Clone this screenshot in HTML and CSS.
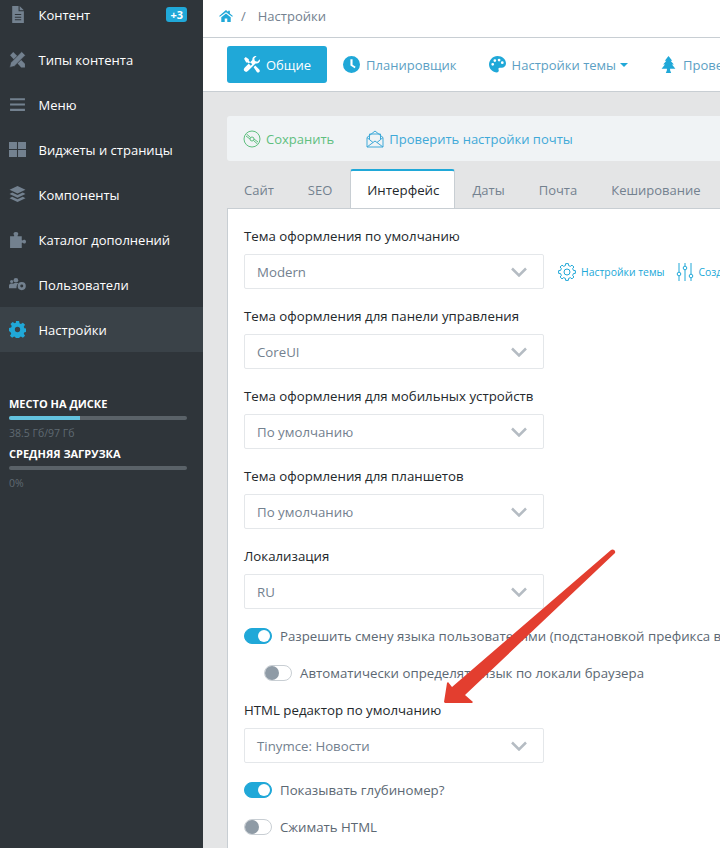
FILE: index.html
```html
<!DOCTYPE html>
<html>
<head>
  <title>Настройки</title>
  <meta name="viewport" content="width=device-width, initial-scale=1">
  <link rel="stylesheet" href="styles.css">
</head>
<body>
  <div class="app">
    <aside class="sidebar">
      <nav class="side-nav">
        <a class="side-item">
          <svg class="side-icon" viewBox="0 0 16 16"><path d="M3 0h6v5h5v11H3z M10 0l4 4h-4z M5.500 7.500v1h6v-1z M5.500 10v1h6v-1z M5.500 12.500v1h6v-1z" fill-rule="evenodd"/></svg>
          <span>Контент</span><span class="side-badge">+3</span>
        </a>
        <a class="side-item">
          <svg class="side-icon" viewBox="0 0 16 16"><path d="M1 4l3-3 11 11v3.500h-3.500z"/><path d="M12 .5l3.500 3.500L5 14.500 .5 15.500 1.500 11z" stroke="#2f353a" stroke-width=".7"/></svg>
          <span>Типы контента</span>
        </a>
        <a class="side-item">
          <svg class="side-icon" viewBox="0 0 16 16"><path d="M1 2h14v2H1z M1 7h14v2H1z M1 12h14v2H1z"/></svg>
          <span>Меню</span>
        </a>
        <a class="side-item">
          <svg class="side-icon" viewBox="0 0 16 16"><path d="M0 1h7.500v6.500H0z M8.500 1H16v6.500H8.500z M0 8.500h7.500V15H0z M8.500 8.500H16V15H8.500z"/></svg>
          <span>Виджеты и страницы</span>
        </a>
        <a class="side-item">
          <svg class="side-icon" viewBox="0 0 16 16"><path d="M8 0l7.500 3.500L8 7 .5 3.500z M3 6l5 2.500L13 6l2.500 1.500L8 11 .5 7.500z M3 10l5 2.500 5-2.500 2.500 1.500L8 15 .5 11.500z"/></svg>
          <span>Компоненты</span>
        </a>
        <a class="side-item">
          <svg class="side-icon" viewBox="0 0 16 16"><path d="M1 5h3.500c.5 0 .5-1 0-1.500-.6-.8-.2-2.500 2-2.500s2.600 1.700 2 2.500c-.5.5-.5 1.500 0 1.500H12v3.500c0 .5 1 .5 1.500 0 .8-.6 2.500-.2 2.500 1.500s-1.700 2.100-2.500 1.500c-.5-.5-1.500-.5-1.500 0V16H1z"/></svg>
          <span>Каталог дополнений</span>
        </a>
        <a class="side-item">
          <svg class="side-icon" viewBox="0 0 16 16"><circle cx="2.500" cy="5.200" r="1.500"/><circle cx="6.500" cy="4" r="2.200"/><path d="M0 11.500V9c0-1 1-2 2-2h1l1 .2C5 6.500 6 6.500 7 6.500h2c-1.500 1-2 3-2 5z"/><circle cx="12" cy="9.500" r="3.800"/><circle cx="12" cy="9.500" r="1.400" fill="#2f353a"/></svg>
          <span>Пользователи</span>
        </a>
        <a class="side-item active">
          <svg class="side-icon" viewBox="0 0 16 16"><path d="M6.500 0h3l.4 2.200 1.300.6 1.900-1.200 2 2-1.200 1.900.6 1.300 2 .4v3l-2 .4-.6 1.300 1.200 1.900-2 2-1.900-1.200-1.300.6-.4 2.200h-3l-.4-2.200-1.300-.6-1.900 1.200-2-2 1.200-1.900-.6-1.300L0 9.500v-3l2-.4.6-1.300L1.400 2.900l2-2 1.900 1.200 1.300-.6z M8 5.500a2.500 2.500 0 100 5 2.500 2.500 0 000-5z" fill-rule="evenodd"/></svg>
          <span>Настройки</span>
        </a>
      </nav>
      <div class="stats">
        <div class="stat-title">МЕСТО НА ДИСКЕ</div>
        <div class="stat-bar"><div class="stat-fill" style="width:40%"></div></div>
        <div class="stat-note">38.5 Гб/97 Гб</div>
        <div class="stat-title">СРЕДНЯЯ ЗАГРУЗКА</div>
        <div class="stat-bar"></div>
        <div class="stat-note">0%</div>
      </div>
    </aside>

    <main class="main">
      <div class="breadcrumb">
        <svg class="home-icon" viewBox="0 0 16 14"><path d="M8 0l2.500 2.200V1h2v3l3.500 3-.8 1L8 2.500.8 8 0 7z M8 4l5.500 4.500V14H9.500v-4h-3v4H2.500V8.500z"/></svg>
        <span class="crumb-sep">/</span>
        <span>Настройки</span>
      </div>

      <div class="toolbar">
        <a class="tool-btn active">
          <svg class="tool-icon" viewBox="0 0 16 16"><path d="M1 2.500L2.500 1l3 2v1.500l3.200 3.200-1.400 1.400L4.500 6H3z M12 0c-2 0-3.500 1.700-3.200 3.700L1.500 11c-1 1-1 2.300-.2 3.200.9 1 2.400 1 3.300 0l7.200-7.200C14.200 7.500 16 6 16 4l-.2-1-2.300 2.300-2.300-.7-.6-2.200L12.800 0z M10 10.500l1.500-1.500 3.800 3.800c.7.800.7 1.700 0 2.300-.7.700-1.600.7-2.300 0z"/></svg>
          <span>Общие</span>
        </a>
        <a class="tool-btn">
          <svg class="tool-icon" viewBox="0 0 16 16"><path d="M8 0a8 8 0 110 16A8 8 0 018 0z M7 3v6l4 2.500.9-1.500L9 8.200V3z" fill-rule="evenodd"/></svg>
          <span>Планировщик</span>
        </a>
        <a class="tool-btn">
          <svg class="tool-icon" viewBox="0 0 16 16"><path d="M8 0c4.500 0 8 3 8 7 0 2.500-2 4-4 4h-2c-1 0-1.500 1-1 1.800.5 1 .2 2.700-1.500 2.700C3.500 15.500 0 12 0 8s3.500-8 8-8z M3.500 6.500a1.300 1.300 0 100 2.600 1.300 1.300 0 000-2.600z M5.500 3a1.300 1.300 0 100 2.600 1.300 1.300 0 000-2.600z M9.500 2.500a1.300 1.300 0 100 2.600 1.300 1.300 0 000-2.600z M12.500 5a1.300 1.300 0 100 2.600 1.300 1.300 0 000-2.600z" fill-rule="evenodd"/></svg>
          <span>Настройки темы</span><i class="caret"></i>
        </a>
        <a class="tool-btn">
          <svg class="tool-icon" viewBox="0 0 16 16"><path d="M8 0l3.500 4.500H10l3 3.500h-1.700l3.200 4H9.500v1.500l1 2.500h-5l1-2.500V12H1.500l3.200-4H3l3-3.500H4.500z"/></svg>
          <span>Проверка</span>
        </a>
      </div>

      <div class="content">
        <div class="actions">
          <a class="action save">
            <svg class="action-icon" viewBox="0 0 18 18" fill="none" stroke="currentColor"><circle cx="9" cy="9" r="8"/><circle cx="9" cy="9" r="2"/><path d="M3.500 4l4 3.500M10.500 10.500l4 3.500M3 6l4 3M11 9l4 3"/></svg>
            <span>Сохранить</span>
          </a>
          <a class="action">
            <svg class="action-icon" viewBox="0 0 18 18" fill="none" stroke="currentColor"><path d="M1 7.500L9 1l8 6.500V17H1z"/><path d="M3.500 9V4h11v5M1 7.500l6 5M17 7.500l-6 5M1 17l8-6 8 6"/></svg>
            <span>Проверить настройки почты</span>
          </a>
        </div>

        <div class="tabs">
          <a class="tab">Сайт</a>
          <a class="tab">SEO</a>
          <a class="tab active">Интерфейс</a>
          <a class="tab">Даты</a>
          <a class="tab">Почта</a>
          <a class="tab">Кеширование</a>
        </div>

        <div class="panel">
          <div class="form-group">
            <label>Тема оформления по умолчанию</label>
            <div class="select-row">
              <div class="select">Modern<svg class="chevron" viewBox="0 0 16 10"><path d="M1 1.500l7 7 7-7"/></svg></div>
              <a class="theme-link">
                <svg class="link-icon" viewBox="0 0 18 18" fill="none" stroke="currentColor"><path d="M7.400 2.600L7.670 .6H10.330L10.600 2.600 12.400 3.340 14 2.120 15.880 4 14.660 5.600 15.400 7.400 17.400 7.670V10.330L15.400 10.600 14.660 12.400 15.880 14 14 15.880 12.400 14.660 10.600 15.400 10.330 17.400H7.670L7.400 15.400 5.600 14.660 4 15.880 2.120 14 3.340 12.400 2.600 10.600 .6 10.330V7.670L2.600 7.400 3.340 5.600 2.120 4 4 2.120 5.600 3.340z"/><circle cx="9" cy="9" r="3"/></svg>
                <span>Настройки темы</span>
              </a>
              <a class="theme-link">
                <svg class="link-icon" viewBox="0 0 18 18" fill="none" stroke="currentColor"><path d="M3 0v9M3 13v5M9 0v3M9 7v11M15 0v11M15 15v3"/><circle cx="3" cy="11" r="1.800"/><circle cx="9" cy="5" r="1.800"/><circle cx="15" cy="13" r="1.800"/></svg>
                <span>Создать</span>
              </a>
            </div>
          </div>
          <div class="form-group">
            <label>Тема оформления для панели управления</label>
            <div class="select">CoreUI<svg class="chevron" viewBox="0 0 16 10"><path d="M1 1.500l7 7 7-7"/></svg></div>
          </div>
          <div class="form-group">
            <label>Тема оформления для мобильных устройств</label>
            <div class="select">По умолчанию<svg class="chevron" viewBox="0 0 16 10"><path d="M1 1.500l7 7 7-7"/></svg></div>
          </div>
          <div class="form-group">
            <label>Тема оформления для планшетов</label>
            <div class="select">По умолчанию<svg class="chevron" viewBox="0 0 16 10"><path d="M1 1.500l7 7 7-7"/></svg></div>
          </div>
          <div class="form-group">
            <label>Локализация</label>
            <div class="select">RU<svg class="chevron" viewBox="0 0 16 10"><path d="M1 1.500l7 7 7-7"/></svg></div>
          </div>
          <div class="switch-row"><i class="switch on"></i><span>Разрешить смену языка пользователями (подстановкой префикса в URL)</span></div>
          <div class="switch-row nested"><i class="switch"></i><span>Автоматически определять язык по локали браузера</span></div>
          <div class="form-group">
            <label>HTML редактор по умолчанию</label>
            <div class="select">Tinymce: Новости<svg class="chevron" viewBox="0 0 16 10"><path d="M1 1.500l7 7 7-7"/></svg></div>
          </div>
          <div class="switch-row"><i class="switch on"></i><span>Показывать глубиномер?</span></div>
          <div class="switch-row"><i class="switch"></i><span>Сжимать HTML</span></div>
        </div>
      </div>
    </main>
  </div>

  <svg class="arrow" viewBox="0 0 720 848"><path d="M611 550c2-1.500 5 .5 4 3L465 695l8 7-1 1-27 0-1-1 3-19 1-1 4 5z"/></svg>
</body>
</html>
```

FILE: styles.css
```css
* {
  box-sizing: border-box;
}
html, body {
  height: 100%;
}
body {
  margin: 0;
  font-family: "Open Sans", sans-serif;
  font-size: 13px;
  color: #5c6873;
  overflow: hidden;
}
.app {
  display: flex;
  height: 848px;
}
.sidebar {
  width: 203px;
  flex: none;
  background: #2f353a;
  color: #fff;
}
.side-nav {
  margin-top: -8px;
}
.side-item {
  display: flex;
  align-items: center;
  height: 45px;
  padding: 0 16px 0 9px;
  color: #fff;
}
.side-item.active {
  background: #3a4248;
}
.side-icon {
  width: 17px;
  height: 17px;
  margin-right: 12.500px;
  fill: #73818f;
}
.side-item.active .side-icon {
  fill: #20a8d8;
}
.side-badge {
  margin-left: auto;
  padding: 0 4px;
  background: #20a8d8;
  border-radius: 3px;
  font-size: 11px;
  font-weight: 700;
  line-height: 15px;
}
.stats {
  padding: 44px 16px 0 9px;
}
.stat-title {
  font-size: 11px;
  font-weight: 700;
  line-height: 15px;
}
.stat-bar {
  height: 4px;
  margin-top: 5px;
  background: #5a6268;
  border-radius: 2px;
  overflow: hidden;
}
.stat-fill {
  height: 100%;
  background: #63c2de;
}
.stat-note {
  margin: 6px 0 5px;
  font-size: 10.500px;
  line-height: 15px;
  color: #5f6a72;
}
.main {
  flex: 1;
  min-width: 0;
  background: #e4e5e6;
}
.breadcrumb {
  display: flex;
  align-items: center;
  height: 38px;
  padding: 0 16px 6px;
  background: #fff;
  border-bottom: 1px solid #c8ced3;
  color: #73818f;
}
.home-icon {
  width: 14px;
  height: 12px;
  fill: #20a8d8;
}
.crumb-sep {
  margin: 0 12px 0 8px;
}
.toolbar {
  display: flex;
  align-items: center;
  height: 54px;
  padding: 0 24px;
  background: #fff;
  border-bottom: 1px solid #c8ced3;
  white-space: nowrap;
}
.tool-btn {
  display: flex;
  align-items: center;
  flex: none;
  height: 37px;
  margin-right: 32px;
  color: #5c9fc4;
}
.tool-btn.active {
  margin-right: 16px;
  padding: 0 16px;
  background: #20a8d8;
  border-radius: 3px;
  color: #fff;
}
.tool-icon {
  width: 17px;
  height: 17px;
  margin-right: 6px;
  fill: #20a8d8;
}
.tool-btn.active .tool-icon {
  fill: #fff;
}
.caret {
  margin-left: 4px;
  border: 4px solid transparent;
  border-top-color: #20a8d8;
  border-bottom: 0;
}
.content {
  padding: 24px 0 0 24px;
}
.actions {
  display: flex;
  align-items: center;
  gap: 32px;
  height: 45px;
  padding: 0 16px;
  background: #f0f3f5;
  border-radius: 3px 0 0 3px;
  color: #3fa9d8;
}
.action {
  display: flex;
  align-items: center;
}
.action.save {
  color: #5fbf7f;
}
.action-icon {
  width: 18px;
  height: 18px;
  margin-right: 5px;
}
.tabs {
  display: flex;
  margin-top: 8px;
  height: 39px;
}
.tab {
  display: flex;
  align-items: center;
  padding: 2px 17px 0;
  color: #73818f;
}
.tab.active {
  margin-left: 1px;
  padding: 0 15px 0 16px;
  background: #fff;
  border: 1px solid #c8ced3;
  border-top: 2px solid #20a8d8;
  border-bottom: 0;
  border-radius: 3px 3px 0 0;
  color: #23282c;
  font-size: 13.300px;
}
.panel {
  height: 640px;
  padding: 18px 16px 0;
  background: #fff;
  border-top: 1px solid #c8ced3;
  border-left: 1px solid #c8ced3;
  font-size: 13.250px;
  white-space: nowrap;
}
.form-group {
  margin-bottom: 18px;
}
label {
  display: block;
  margin-bottom: 9px;
  line-height: 18px;
  color: #23282c;
}
.select-row {
  display: flex;
  align-items: center;
}
.select {
  display: flex;
  align-items: center;
  justify-content: space-between;
  flex: none;
  width: 300px;
  height: 35px;
  padding: 0 16px 0 12px;
  border: 1px solid #e4e7ea;
  border-radius: 2px;
  color: #73818f;
}
.chevron {
  width: 16px;
  height: 10px;
  fill: none;
  stroke: #b5bcc3;
  stroke-width: 2.500;
}
.theme-link {
  display: flex;
  align-items: center;
  margin-left: 14px;
  font-size: 10.400px;
  color: #20a8d8;
}
.theme-link + .theme-link {
  margin-left: 11px;
}
.link-icon {
  width: 18px;
  height: 18px;
  margin-right: 5px;
}
.switch-row {
  display: flex;
  align-items: center;
  gap: 8px;
  height: 20px;
  margin-bottom: 17px;
}
.form-group + .switch-row {
  margin-top: -1px;
}
.switch-row.nested {
  margin-left: 20px;
  margin-bottom: 18px;
}
.switch {
  position: relative;
  flex: none;
  width: 28px;
  height: 16px;
  border: 1px solid #c8ced3;
  border-radius: 8px;
  background: #fff;
}
.switch::after {
  content: "";
  position: absolute;
  top: 0;
  left: 0;
  width: 14px;
  height: 14px;
  border-radius: 50%;
  background: #8f9ba6;
}
.switch.on {
  background: #20a8d8;
  border-color: #20a8d8;
}
.switch.on::after {
  top: 1px;
  left: 13px;
  width: 12px;
  height: 12px;
  background: #fff;
}
.arrow {
  position: absolute;
  top: 0;
  left: 0;
  width: 720px;
  height: 848px;
  fill: #e33e2f;
  pointer-events: none;
}
```
